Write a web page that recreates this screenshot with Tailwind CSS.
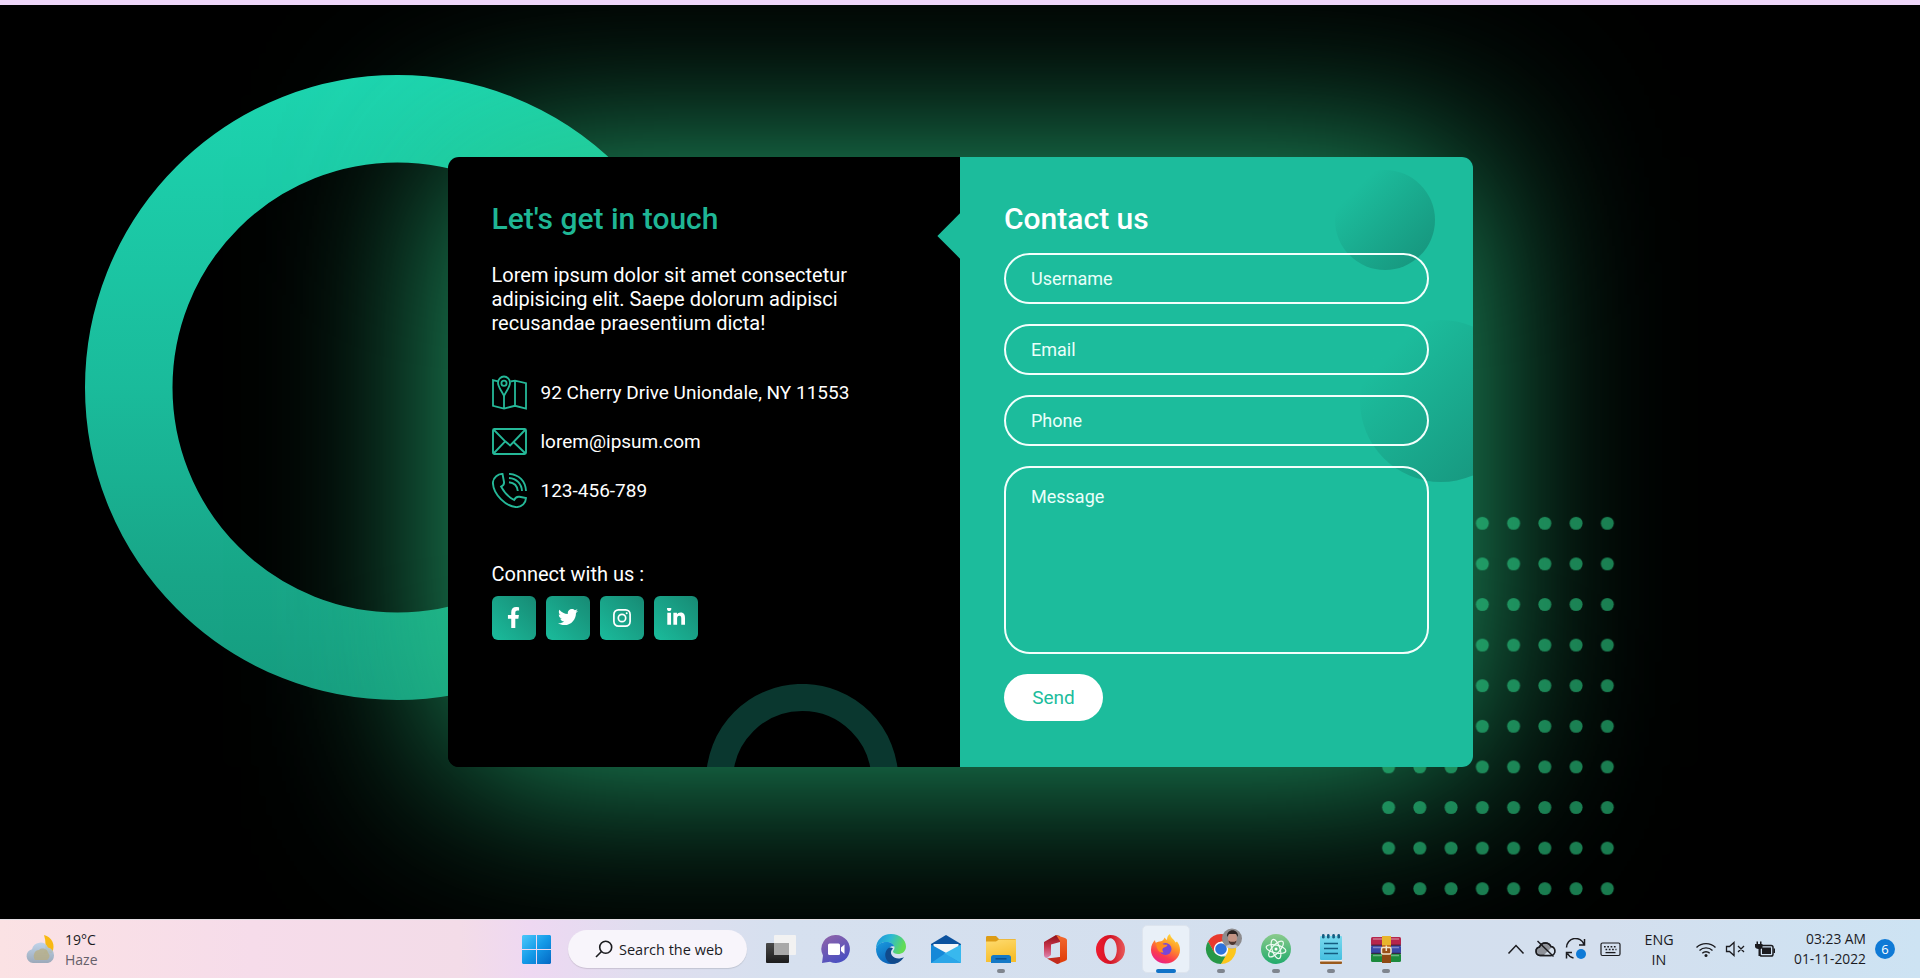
<!DOCTYPE html>
<html lang="en">
<head>
<meta charset="utf-8">
<title>Contact us</title>
<script src="https://cdn.jsdelivr.net/npm/@tailwindcss/browser@4"></script>
</head>
<body class="w-[1920px] h-[978px] overflow-hidden bg-black flex flex-col font-['Roboto',sans-serif]">
<div class="h-[5px] shrink-0 bg-[#eed6f9]"></div>

<main class="relative h-[914px] shrink-0 overflow-hidden bg-black">
  <!-- background ring -->
  <svg class="absolute left-[85px] top-[70px]" width="625" height="625" viewBox="0 0 625 625" fill="none">
    <defs><linearGradient id="ring" gradientUnits="userSpaceOnUse" x1="312" y1="0" x2="312" y2="625"><stop offset="0" stop-color="#1dd5b0"/><stop offset=".5" stop-color="#1abb9b"/><stop offset=".8" stop-color="#18a688"/><stop offset="1" stop-color="#169c80"/></linearGradient></defs>
    <circle cx="312.5" cy="312.5" r="268.75" stroke="url(#ring)" stroke-width="87.5"/>
  </svg>
  <!-- dot grid -->
  <svg class="absolute left-[1373px] top-[498px]" width="250" height="406" viewBox="0 0 250 406">
    <defs><pattern id="dots" width="31.25" height="40.6" patternUnits="userSpaceOnUse"><circle cx="15.6" cy="20.3" r="6.5" fill="#1a7b4f"/></pattern></defs>
    <rect width="250" height="406" fill="url(#dots)"/>
  </svg>

  <section class="relative ml-[448px] mt-[152px] w-[1025px] h-[610px] rounded-[11px] flex overflow-visible shadow-[0_0_188px_0px_rgba(42,202,134,0.87)]">
    <!-- contact info -->
    <div class="relative w-[512px] h-full bg-black rounded-l-[11px] overflow-hidden pl-[43.5px] pt-[42px] text-white">
      <svg class="absolute left-[258px] top-[526.5px]" width="194" height="194" fill="none"><circle cx="96.200" cy="96" r="82.600" stroke="#0a372f" stroke-width="27"/></svg>
      <h3 class="text-[30px] leading-[40px] font-medium text-[#1fb695]">Let's get in touch</h3>
      <p class="mt-[24px] text-[20px] leading-[24px] whitespace-nowrap">Lorem ipsum dolor sit amet consectetur<br>adipisicing elit. Saepe dolorum adipisci<br>recusandae praesentium dicta!</p>
      <ul class="mt-[33px] text-[19px]">
        <li class="flex items-center gap-[14px] h-[49px]">
          <svg width="35" height="35" viewBox="0 0 35 35" fill="none" stroke="#25b898" stroke-width="1.8"><path d="M6 6.4 1 5.2v25.6l11 2.7 11-2.7 11 2.7V8.2L23 5.6l-4.600.9M12 21v12.500M23 5.600v25.200"/><path d="M12 20.800C9 15 6 12 6 7.800a6 6.300 0 0 1 12 0C18 12 15 15 12 20.800z"/><circle cx="12" cy="8.200" r="2.600"/></svg>
          <span class="pt-[2px]">92 Cherry Drive Uniondale, NY 11553</span></li>
        <li class="flex items-center gap-[14px] h-[49px]">
          <svg width="35" height="35" viewBox="0 0 35 35" fill="none" stroke="#25b898" stroke-width="1.9"><rect x="1" y="5" width="33" height="25" rx="1.5"/><path d="M2 6 13.200 17.300 18.200 21.500 33 6M13.200 17.300 2 29M21.500 18 33 29"/></svg>
          <span class="pt-[2px]">lorem@ipsum.com</span></li>
        <li class="flex items-center gap-[14px] h-[49px]">
          <svg width="35" height="35" viewBox="0 0 35 35" fill="none" stroke="#25b898" stroke-width="1.9"><path d="M10.500.9C6.500 1 1 4 .9 9.800c.3 11.500 13 24 23.600 24.300C30 34 33.800 30 34 25l-6.500-1.200c-2.400-.4-4.300.8-5.400 3.200-5-2.500-9.600-7.200-13-13.400C11.600 12.400 12.300 11 12 9z"/><path d="M17 .9C27 1.500 33.500 8 34 18M17 5c7.500.5 12.500 5.500 13 13M17 9.200c5 .5 8.300 3.800 8.800 8.800"/></svg>
          <span class="pt-[2px]">123-456-789</span></li>
      </ul>
      <p class="mt-[47px] text-[20px] leading-[24px]">Connect with us :</p>
      <div class="mt-[10px] flex gap-[10px]">
        <a class="w-[44px] h-[44px] rounded-[6px] bg-linear-45 from-[#1abc9c] to-[#178a74] flex items-center justify-center"><svg class="mb-[2px]" width="13" height="21" viewBox="0 0 320 512" fill="#fff"><path d="M279.140 288l14.220-92.660h-88.910v-60.130c0-25.350 12.420-50.060 52.240-50.060h40.420V6.260S260.430 0 225.360 0c-73.220 0-121.080 44.380-121.080 124.720v70.620H22.890V288h81.390v224h100.170V288z"/></svg></a>
        <a class="w-[44px] h-[44px] rounded-[6px] bg-linear-45 from-[#1abc9c] to-[#178a74] flex items-center justify-center"><svg class="mb-[2px]" width="20" height="20" viewBox="0 0 512 512" fill="#fff"><path d="M459.370 151.716c.325 4.548.325 9.097.325 13.645 0 138.720-105.583 298.558-298.558 298.558-59.452 0-114.680-17.219-161.137-47.106 8.447.974 16.568 1.299 25.340 1.299 49.055 0 94.213-16.568 130.274-44.832-46.132-.975-84.792-31.188-98.112-72.772 6.498.974 12.995 1.624 19.818 1.624 9.421 0 18.843-1.300 27.614-3.573-48.081-9.747-84.143-51.980-84.143-102.985v-1.299c13.969 7.797 30.214 12.670 47.431 13.319-28.264-18.843-46.781-51.005-46.781-87.391 0-19.492 5.197-37.360 14.294-52.954 51.655 63.675 129.300 105.258 216.365 109.807-1.624-7.797-2.599-15.918-2.599-24.040 0-57.828 46.782-104.934 104.934-104.934 30.213 0 57.502 12.670 76.670 33.137 23.715-4.548 46.456-13.320 66.599-25.340-7.798 24.366-24.366 44.833-46.132 57.827 21.117-2.273 41.584-8.122 60.426-16.243-14.292 20.791-32.161 39.308-52.628 54.253z"/></svg></a>
        <a class="w-[44px] h-[44px] rounded-[6px] bg-linear-45 from-[#1abc9c] to-[#178a74] flex items-center justify-center"><svg class="mb-[1px]" width="18" height="18" viewBox="0 0 18 18" fill="none" stroke="#fff" stroke-width="1.700"><rect x=".9" y=".9" width="16.200" height="16.200" rx="4.500"/><circle cx="9" cy="9" r="3.700"/><circle cx="13.700" cy="4.300" r="1" fill="#fff" stroke="none"/></svg></a>
        <a class="w-[44px] h-[44px] rounded-[6px] bg-linear-45 from-[#1abc9c] to-[#178a74] flex items-center justify-center"><svg class="mb-[3px]" width="18" height="18" viewBox="0 0 448 448" fill="#fff"><path d="M100.280 416H7.400V116.900h92.880zM53.790 76.100C24.090 76.100 0 51.500 0 21.800a53.790 53.790 0 0 1 107.580 0c0 29.700-24.100 54.300-53.790 54.300zM447.900 416h-92.680V270.400c0-34.700-.7-79.200-48.290-79.200-48.290 0-55.690 37.700-55.690 76.700V416h-92.780V116.900h89.080v40.800h1.300c12.400-23.500 42.690-48.300 87.880-48.300 94 0 111.280 61.900 111.280 142.300V416z"/></svg></a>
      </div>
    </div>
    <!-- pointer between the halves -->
    <div class="absolute left-[496px] top-[63px] size-[32px] rotate-45 bg-[#1cbc9c]"></div>
    <!-- form -->
    <form class="relative w-[513px] h-full bg-[#1cbc9c] rounded-r-[11px] overflow-hidden pl-[44px] pt-[42px] text-white">
      <div class="absolute left-[375px] top-[13px] size-[100px] rounded-full bg-linear-135 from-[#1cbc9c] from-20% to-[#16917a]"></div>
      <div class="absolute left-[400px] top-[163px] size-[162px] rounded-full bg-linear-135 from-[#1cbc9c] from-20% to-[#16917a]"></div>
      <div class="relative flex flex-col items-start gap-[20px] text-[18px] text-[#eafffa]">
        <h3 class="text-[30px] leading-[40px] font-medium text-white -mb-[6px]">Contact us</h3>
        <div class="w-[425px] h-[51px] rounded-[26px] border-2 border-[#f3fffc] flex items-center pl-[25px] pb-[1px]">Username</div>
        <div class="w-[425px] h-[51px] rounded-[26px] border-2 border-[#f3fffc] flex items-center pl-[25px] pb-[1px]">Email</div>
        <div class="w-[425px] h-[51px] rounded-[26px] border-2 border-[#f3fffc] flex items-center pl-[25px] pb-[1px]">Phone</div>
        <div class="w-[425px] h-[188px] rounded-[26px] border-2 border-[#f3fffc] pl-[25px] pt-[15px]">Message</div>
        <button type="button" class="w-[99px] h-[47px] pt-[1px] rounded-[24px] bg-white text-[19px] text-[#1cbc9c]">Send</button>
      </div>
    </form>
  </section>
</main>

<footer class="h-[59px] shrink-0 flex items-center font-['Open_Sans',sans-serif] text-[#1b1b1f] bg-[linear-gradient(90deg,#fbe2e4_0px,#f6dcea_250px,#f3dce8_460px,#eed8f2_530px,#e0deef_640px,#d6e0ef_780px,#d3dfee_1300px,#d4dfee_1600px,#cde3f3_1920px)] border-t border-[#e4dfe4]">
  <div class="w-[509px] pl-[25px] flex items-center gap-[9px]">
    <svg width="31" height="34" viewBox="0 0 31 34"><defs><linearGradient id="cl" x2="0" y2="1"><stop stop-color="#b9d2ea"/><stop offset="1" stop-color="#91a3b5"/></linearGradient></defs><path d="M19 3c8 2 12 10 8 18l-8 1c2-7 2-13 0-19z" fill="#f8b913"/><path d="M8 31a7 7 0 0 1-1-13.800 8.500 8.500 0 0 1 16-1.700A8 8 0 0 1 23 31z" fill="url(#cl)" opacity=".9"/><path d="M10 28c-3-5 0-10 4-10 3-3 9-1 9 3 3 2 1 6-1 7z" fill="#b8ae82" opacity=".75"/></svg>
    <div class="pt-[1px] text-[14px] leading-[20px]"><div>19°C</div><div class="text-[#66606a]">Haze</div></div>
  </div>
  <div class="w-[55px] flex justify-center">
    <svg width="29" height="29" viewBox="0 0 29 29"><defs><linearGradient id="win" x2="1" y2="1"><stop stop-color="#4cc8fb"/><stop offset=".5" stop-color="#149ae8"/><stop offset="1" stop-color="#0468c4"/></linearGradient></defs><path d="M1 0h13v14H0V1zM15 0h13l1 1v13H15zM0 15h14v14H1l-1-1zM15 15h14v13l-1 1H15z" fill="url(#win)"/></svg>
  </div>
  <div class="ml-[4px] mr-[6px] w-[179px] h-[38px] rounded-full bg-[#f8f5fb] shadow-[0_1px_1px_rgba(0,0,0,0.12)] flex items-center pl-[27px] gap-[6px] text-[14.500px] whitespace-nowrap">
    <svg width="18" height="18" viewBox="0 0 18 18" fill="none" stroke="#1b1b1f" stroke-width="1.600"><circle cx="10.700" cy="7.300" r="6"/><path d="M6.500 11.500 1 17"/></svg><span class="pt-[1px]">Search the web</span>
  </div>
  <div class="w-[55px] flex justify-center">
    <svg width="30" height="29" viewBox="0 0 30 29"><defs><linearGradient id="tv" x2="0" y2="1"><stop stop-color="#4a4a4a"/><stop offset="1" stop-color="#1c1c1c"/></linearGradient></defs><rect y="8" width="23" height="20" rx="1" fill="url(#tv)"/><rect x="8" y="0" width="22" height="20" rx="1" fill="#f3f2f1" opacity=".95"/><rect x="8" y="8" width="15" height="12" fill="#a9a9a9"/></svg>
  </div>
  <div class="w-[55px] flex justify-center">
    <svg width="30" height="30" viewBox="0 0 30 30"><defs><linearGradient id="ch" x2=".5" y2="1"><stop stop-color="#9465a8"/><stop offset="1" stop-color="#4c50c0"/></linearGradient></defs><path d="M15 1a14 14 0 1 1-6 26.700L1 29l1-7.500A14 14 0 0 1 15 1z" fill="url(#ch)"/><rect x="7" y="9.500" width="12" height="11.500" rx="1.500" fill="#fff"/><path d="M20 13.500l3.500-3v9.500L20 17z" fill="#fff"/></svg>
  </div>
  <div class="w-[55px] flex justify-center">
    <svg width="30" height="30" viewBox="0 0 30 30"><defs><linearGradient id="e1" x2="1" y2=".3"><stop stop-color="#1a8fdc"/><stop offset=".5" stop-color="#2bb8d4"/><stop offset="1" stop-color="#62dc55"/></linearGradient><linearGradient id="e2" x2=".6" y2="1"><stop stop-color="#1a9be0"/><stop offset="1" stop-color="#0b5fb5"/></linearGradient></defs><path d="M0 15C0 6 6.500 0 15 0c9 0 15 6 15 12.500 0 5-4 7.500-8 7.500-3 0-5-1-5-2.500 0-1 1.500-1.500 1.500-4S15 8 10.500 8C5 8 1 11 0 15z" fill="url(#e1)"/><path d="M0 15c1-4.500 5-7 10.500-7 4 0 7 2 7.800 4.500C16 11.500 12 13 12 18c0 6 6 10 11.500 8.500C21 29 18.500 30 15 30 6.500 30 0 23.500 0 15z" fill="url(#e2)"/><path d="M12.500 14c-6 5-3 14.500 4 15.800 5 .2 9.500-3 11.500-6.800-4 2.300-9.500 2-12-1.500-1.700-2.500-1.300-5 1-7-1.500-1.200-3-1.200-4.500-.5z" fill="#114a8b"/></svg>
  </div>
  <div class="w-[55px] flex justify-center">
    <svg width="30" height="28" viewBox="0 0 30 28"><path d="M15 0l15 9v4H0V9z" fill="#0c529e"/><path d="M2.500 9h25v3L15 19 2.500 12z" fill="#f5f6f8"/><path d="M0 9.500 17 19l13 9H0z" fill="#1688d8"/><path d="M30 9.500V28L13 18.800z" fill="#38b8ee"/><path d="M0 28l14-9.500L30 28z" fill="#2ba6e8"/></svg>
  </div>
  <div class="relative w-[55px] flex justify-center">
    <svg width="30" height="27" viewBox="0 0 30 27"><defs><linearGradient id="fo" x2=".3" y2="1"><stop stop-color="#fedb70"/><stop offset="1" stop-color="#f7be2c"/></linearGradient></defs><path d="M0 1.500C0 .5.500 0 1.500 0H10l3 3h15.500c1 0 1.500.5 1.500 1.500V10H0z" fill="#dd9c16"/><path d="M0 5.500h10l3-2h17V26H0z" fill="url(#fo)"/><path d="M5 27v-5.500c0-1.500 1-2.500 2.500-2.500h15c1.500 0 2.500 1 2.500 2.500V27z" fill="#1579c6"/><path d="M9.500 22.800h11" stroke="#0b4f8e" stroke-width="1.500"/></svg>
    <span class="absolute -bottom-[10px] w-[8px] h-[4px] rounded-full bg-[#7f858e]"></span>
  </div>
  <div class="w-[55px] flex justify-center">
    <svg width="23" height="29" viewBox="0 0 23 29"><defs><linearGradient id="o1" x2="0" y2="1"><stop stop-color="#8c0f16"/><stop offset=".5" stop-color="#c8344c"/><stop offset="1" stop-color="#dd88b4"/></linearGradient><linearGradient id="o2" x2="0" y2="1"><stop stop-color="#f26a30"/><stop offset="1" stop-color="#e03a06"/></linearGradient></defs><path d="M0 7 12 0l4 1v6L7 9.500V20l-4 3c-1.500 0-3-1-3-3z" fill="url(#o1)"/><path d="M12 0l9 3c1.200.5 2 1 2 2.500v18c0 1.500-.8 2-2 2.500l-8 3V23l3-.8V6z" fill="url(#o2)"/><path d="M3 23.500 16 22v6l-3 1z" fill="#c22a1c"/></svg>
  </div>
  <div class="w-[55px] flex justify-center">
    <svg width="29" height="29" viewBox="0 0 29 29"><defs><linearGradient id="op" x2="1" y2="0"><stop stop-color="#ee1b2e"/><stop offset=".5" stop-color="#d31425"/><stop offset="1" stop-color="#e85a5a"/></linearGradient></defs><path fill-rule="evenodd" d="M14.500 0a14.500 14.500 0 1 0 0 29 14.500 14.500 0 0 0 0-29zm0 3.300c3.500 0 6.300 5 6.300 11.200s-2.800 11.200-6.300 11.200S8.200 20.700 8.200 14.500 11 3.300 14.500 3.300z" fill="url(#op)"/></svg>
  </div>
  <div class="w-[55px] flex justify-center">
    <div class="relative w-[48px] h-[48px] rounded-[5px] bg-[#e9f0f8] border border-[#dde4ee] flex items-center justify-center">
      <svg width="29" height="30" viewBox="0 0 29 30"><defs><linearGradient id="ff" x1=".8" y1="0" x2=".3" y2="1"><stop stop-color="#ffe43c"/><stop offset=".4" stop-color="#ff9328"/><stop offset=".75" stop-color="#fb3a50"/><stop offset="1" stop-color="#e8218c"/></linearGradient></defs><path d="M0 16C0 11 2 8 4 6c0 1 .3 2 1 3 1-1 2.500-1.500 4-1.500C12 7 13 5 13.500 3.500c1 1 1.500 2 2.500 2.500C16 3 17 1 19 0c.5 4 4 5 5.500 8.500l1.500-1c2 2.500 3 5.500 3 8.500 0 7.500-6.500 13.500-14.500 13.500S0 23.500 0 16z" fill="url(#ff)"/><circle cx="14.500" cy="15" r="6" fill="#7746d8"/><path d="M5 9c3-1 6 0 7.500 1.500l4 .3c-.5 2-2 2.500-4 3-1.500 1-1.500 3 0 4.500-3.500 1-7-2-7.500-9.300z" fill="#ff8b20"/></svg>
      <span class="absolute bottom-[-1px] w-[20px] h-[4px] rounded-full bg-[#1173c8]"></span>
    </div>
  </div>
  <div class="relative w-[55px] flex justify-center">
    <svg class="overflow-visible" width="30" height="30" viewBox="0 0 30 30"><path d="M15 0a15 15 0 0 1 13 7.500H15L8.500 19 2 7.500A15 15 0 0 1 15 0z" fill="#e8392d"/><path d="M2 7.500 8.500 18.800 15 22.500h6.500L15 30A15 15 0 0 1 2 7.500z" fill="#279847"/><path d="M28 7.500A15 15 0 0 1 15 30l6.500-11.300L15 7.500z" fill="#fcc61c"/><circle cx="15" cy="15" r="7.200" fill="#fff"/><circle cx="15" cy="15" r="5.800" fill="#2d73dc"/><clipPath id="av"><circle cx="26" cy="4.500" r="10"/></clipPath><g clip-path="url(#av)"><rect x="16" y="-6" width="20" height="21" fill="#8d8b8d"/><path d="M17 15c2-6 15-6 19 0z" fill="#c7c5cb"/><ellipse cx="26.500" cy="4.500" rx="4.500" ry="6" fill="#c49383"/><path d="M21 3c-1-9 12-9 11 0l-2-3h-7z" fill="#2c2422"/><path d="M22.500 6.500c1 6 7 6 8 0l-2 1.200h-4z" fill="#4d3630"/></g></svg>
    <span class="absolute -bottom-[9px] w-[8px] h-[4px] rounded-full bg-[#7f858e]"></span>
  </div>
  <div class="relative w-[55px] flex justify-center">
    <svg width="30" height="30" viewBox="0 0 30 30" fill="none" stroke="#eefaf2" stroke-width="1.200"><defs><linearGradient id="at" x2="0" y2="1"><stop stop-color="#8acb8c"/><stop offset="1" stop-color="#22ab6c"/></linearGradient></defs><circle cx="15" cy="15" r="15" fill="url(#at)" stroke="none"/><ellipse cx="15" cy="15" rx="10" ry="4" transform="rotate(12 15 15)"/><ellipse cx="15" cy="15" rx="10" ry="4" transform="rotate(72 15 15)"/><ellipse cx="15" cy="15" rx="10" ry="4" transform="rotate(132 15 15)"/><circle cx="15" cy="15" r="1.500" fill="#fff" stroke="none"/></svg>
    <span class="absolute -bottom-[9px] w-[8px] h-[4px] rounded-full bg-[#7f858e]"></span>
  </div>
  <div class="relative w-[55px] flex justify-center">
    <svg width="22" height="30" viewBox="0 0 22 30"><defs><linearGradient id="np" x2="0" y2="1"><stop stop-color="#7ad9ee"/><stop offset="1" stop-color="#45bfe0"/></linearGradient></defs><rect y="27" width="22" height="3" rx="1" fill="#9a5a1c"/><rect y="25" width="22" height="2.500" fill="#f0ece8"/><rect y="2" width="22" height="24" rx="1" fill="url(#np)"/><g fill="#145c80"><rect x="2" width="2.600" height="4.500" rx="1.300"/><rect x="7" width="2.600" height="4.500" rx="1.300"/><rect x="12.300" width="2.600" height="4.500" rx="1.300"/><rect x="17.400" width="2.600" height="4.500" rx="1.300"/></g><path d="M4 9.500h14M4 14.500h14M4 19.500h14" stroke="#145c80" stroke-width="1.700"/></svg>
    <span class="absolute -bottom-[9px] w-[8px] h-[4px] rounded-full bg-[#7f858e]"></span>
  </div>
  <div class="relative w-[55px] flex justify-center">
    <svg width="30" height="27" viewBox="0 0 30 27"><rect y="1" width="30" height="8.500" rx="1.500" fill="#b5264c"/><rect y="9.500" width="30" height="8" rx="1.500" fill="#3a48a8"/><rect y="17.500" width="30" height="8.500" rx="1.500" fill="#1c8a3c"/><path d="M2 3h26M2 11.500h26M2 19.500h26" stroke="#fff" stroke-opacity=".35" stroke-width="1.400"/><path d="M0 9.200h30M0 17.300h30" stroke="#2a1530" stroke-width="1"/><rect x="11" width="9" height="27" fill="#c4711c"/><rect x="11" width="9" height="9" fill="#e8b52c"/><rect x="11" y="18" width="9" height="9" fill="#8f4a14"/><rect x="10.500" y="11.500" width="9.500" height="6.500" rx="1.500" fill="#9a5018" stroke="#f2e6cc" stroke-width="1.500"/><path d="M15.300 9.500v5.500" stroke="#f2e6cc" stroke-width="1.500"/></svg>
    <span class="absolute -bottom-[10px] w-[8px] h-[4px] rounded-full bg-[#7f858e]"></span>
  </div>

  <!-- tray -->
  <div class="ml-[94px] flex items-center">
    <svg width="18" height="12" viewBox="0 0 18 12" fill="none" stroke="#1b1b1f" stroke-width="1.500"><path d="M1.500 10.500 9 2.500l7.500 8"/></svg>
    <svg class="ml-[10px]" width="21" height="18" viewBox="0 0 21 18"><path d="M5 15.500a4.300 4.300 0 0 1-.5-8.500A6.300 6.300 0 0 1 16 6.500a4.600 4.600 0 0 1 .3 9z" fill="#8f9299" stroke="#1b1b1f" stroke-width="1.400"/><path d="M9 15l8-8c3 1 3.500 2.500 3 5s-2 3-4 3z" fill="#d5dfeb"/><path d="M5 15.500a4.300 4.300 0 0 1-.5-8.500A6.300 6.300 0 0 1 16 6.500a4.600 4.600 0 0 1 .3 9z" fill="none" stroke="#1b1b1f" stroke-width="1.400"/><path d="M2.500 1l16 15.500" stroke="#1b1b1f" stroke-width="1.500"/></svg>
    <svg class="ml-[9px]" width="22" height="22" viewBox="0 0 22 22" fill="none" stroke="#1b1b1f" stroke-width="1.500"><path d="M1.500 9.500A9 9 0 0 1 19 6.500M19.500 1v6H14M8.500 20A9 9 0 0 1 2.500 15.500M1.500 20.500v-6H7"/><circle cx="16" cy="16" r="5" fill="#0f7ad6" stroke="none"/></svg>
    <svg class="ml-[13px]" width="21" height="15" viewBox="0 0 21 15" fill="none" stroke="#1b1b1f"><rect x="1" y="1" width="19" height="12.500" rx="1.500" stroke-width="1.200"/><path d="M4 4.700h13M5.500 7.500h11" stroke-dasharray="1.700 1.600" stroke-width="1.500"/><path d="M5.500 10.600h10" stroke-width="1.300"/></svg>
    <div class="ml-[19px] w-[38px] pt-[1px] text-center text-[14.300px] leading-[20px]">ENG<br>IN</div>
    <svg class="ml-[17px]" width="22" height="17" viewBox="0 0 22 17" fill="none" stroke="#1b1b1f" stroke-width="1.400"><path d="M1.500 6.500a13.500 13.500 0 0 1 19 0M4.500 9.500a9.300 9.300 0 0 1 13 0M7.300 12.300a5.300 5.300 0 0 1 7.400 0"/><circle cx="11" cy="14.500" r="1.500" fill="#1b1b1f" stroke="none"/></svg>
    <svg class="ml-[8px]" width="21" height="16" viewBox="0 0 21 16" fill="none" stroke="#1b1b1f" stroke-width="1.300"><path d="M1.500 5.500v5h3l4.500 4V1.500l-4.500 4zM13 5l6 6M19 5l-6 6"/></svg>
    <svg class="ml-[9px]" width="21" height="17" viewBox="0 0 21 17"><rect x="5" y="4.500" width="13" height="10.500" rx="1.800" fill="none" stroke="#1b1b1f" stroke-width="1.500"/><rect x="7" y="6.500" width="9" height="6.500" fill="#1b1b1f"/><path d="M18.500 7.500h1.500v4.500h-1.500z" fill="#1b1b1f"/><path d="M0 3h1.500V.5H3V3h2V.5h1.500V3H7.500v3c0 1.500-1 2-2.500 2v7H3.500V8C1.500 8 0 7 0 5.500z" fill="#1b1b1f"/></svg>
    <div class="ml-[10px] w-[80px] text-right text-[13.800px] leading-[20px] whitespace-nowrap">03:23 AM<br>01-11-2022</div>
    <div class="ml-[9px] size-[20px] rounded-full bg-[#0f7ad6] text-white text-[13px] leading-[20px] text-center">6</div>
  </div>
</footer>
</body>
</html>
